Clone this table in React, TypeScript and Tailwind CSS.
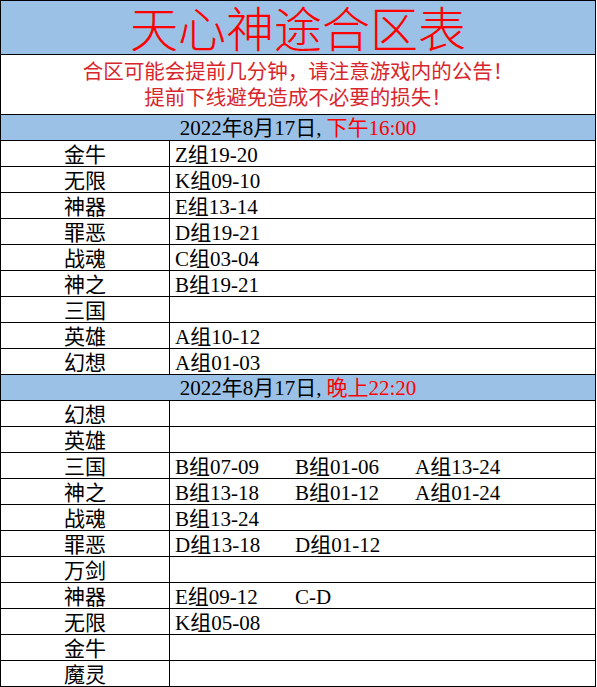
const font = { fontFamily: '"Liberation Serif", "Noto Sans CJK SC", serif' }

type Row = { name: string; groups: string[] }

const afternoon: Row[] = [
  { name: "金牛", groups: ["Z组19-20"] },
  { name: "无限", groups: ["K组09-10"] },
  { name: "神器", groups: ["E组13-14"] },
  { name: "罪恶", groups: ["D组19-21"] },
  { name: "战魂", groups: ["C组03-04"] },
  { name: "神之", groups: ["B组19-21"] },
  { name: "三国", groups: [] },
  { name: "英雄", groups: ["A组10-12"] },
  { name: "幻想", groups: ["A组01-03"] },
]

const evening: Row[] = [
  { name: "幻想", groups: [] },
  { name: "英雄", groups: [] },
  { name: "三国", groups: ["B组07-09", "B组01-06", "A组13-24"] },
  { name: "神之", groups: ["B组13-18", "B组01-12", "A组01-24"] },
  { name: "战魂", groups: ["B组13-24"] },
  { name: "罪恶", groups: ["D组13-18", "D组01-12"] },
  { name: "万剑", groups: [] },
  { name: "神器", groups: ["E组09-12", "C-D"] },
  { name: "无限", groups: ["K组05-08"] },
  { name: "金牛", groups: [] },
  { name: "魔灵", groups: [] },
]

const DateRow = ({ day, time }: { day: string; time: string }) => (
  <div className="h-[26px] pt-[2px] flex items-center justify-center border-b border-black bg-[#9bc2e6] text-[21px] leading-none text-black">
    <span>{day},</span>
    <span className="ml-[5px] text-[#ff0000]">{time}</span>
  </div>
)

const DataRow = ({ row }: { row: Row }) => (
  <div className="h-[26px] grid grid-cols-[169px_1fr] border-b border-black text-[21px] leading-none text-black">
    <div className="pt-[3px] flex items-center justify-center border-r border-black">{row.name}</div>
    <div className="pt-[3px] flex items-center pl-[5px]">
      {row.groups.map((g) => (
        <span key={g} className="w-[120px] shrink-0">
          {g}
        </span>
      ))}
    </div>
  </div>
)

const App = () => {
  return (
    <div className="w-[597px] h-[687px] bg-white overflow-hidden" style={font}>
      <div className="w-[596px] border-l border-r border-t border-black">
        {/* Title */}
        <div className="h-[54px] pt-[6px] flex items-center justify-center border-b border-black bg-[#9bc2e6]">
          <span className="text-[48px] leading-none text-[#ff0000] font-light">天心神途合区表</span>
        </div>

        {/* Notice */}
        <div className="h-[60px] pt-[1px] flex flex-col items-center justify-center border-b border-black text-[20.5px] leading-[26px] text-[#d8262c]">
          <div>合区可能会提前几分钟，请注意游戏内的公告！</div>
          <div>提前下线避免造成不必要的损失！</div>
        </div>

        <DateRow day="2022年8月17日" time="下午16:00" />
        {afternoon.map((r, i) => (
          <DataRow key={"a" + i} row={r} />
        ))}

        <DateRow day="2022年8月17日" time="晚上22:20" />
        {evening.map((r, i) => (
          <DataRow key={"e" + i} row={r} />
        ))}
      </div>
    </div>
  )
}

export default App
